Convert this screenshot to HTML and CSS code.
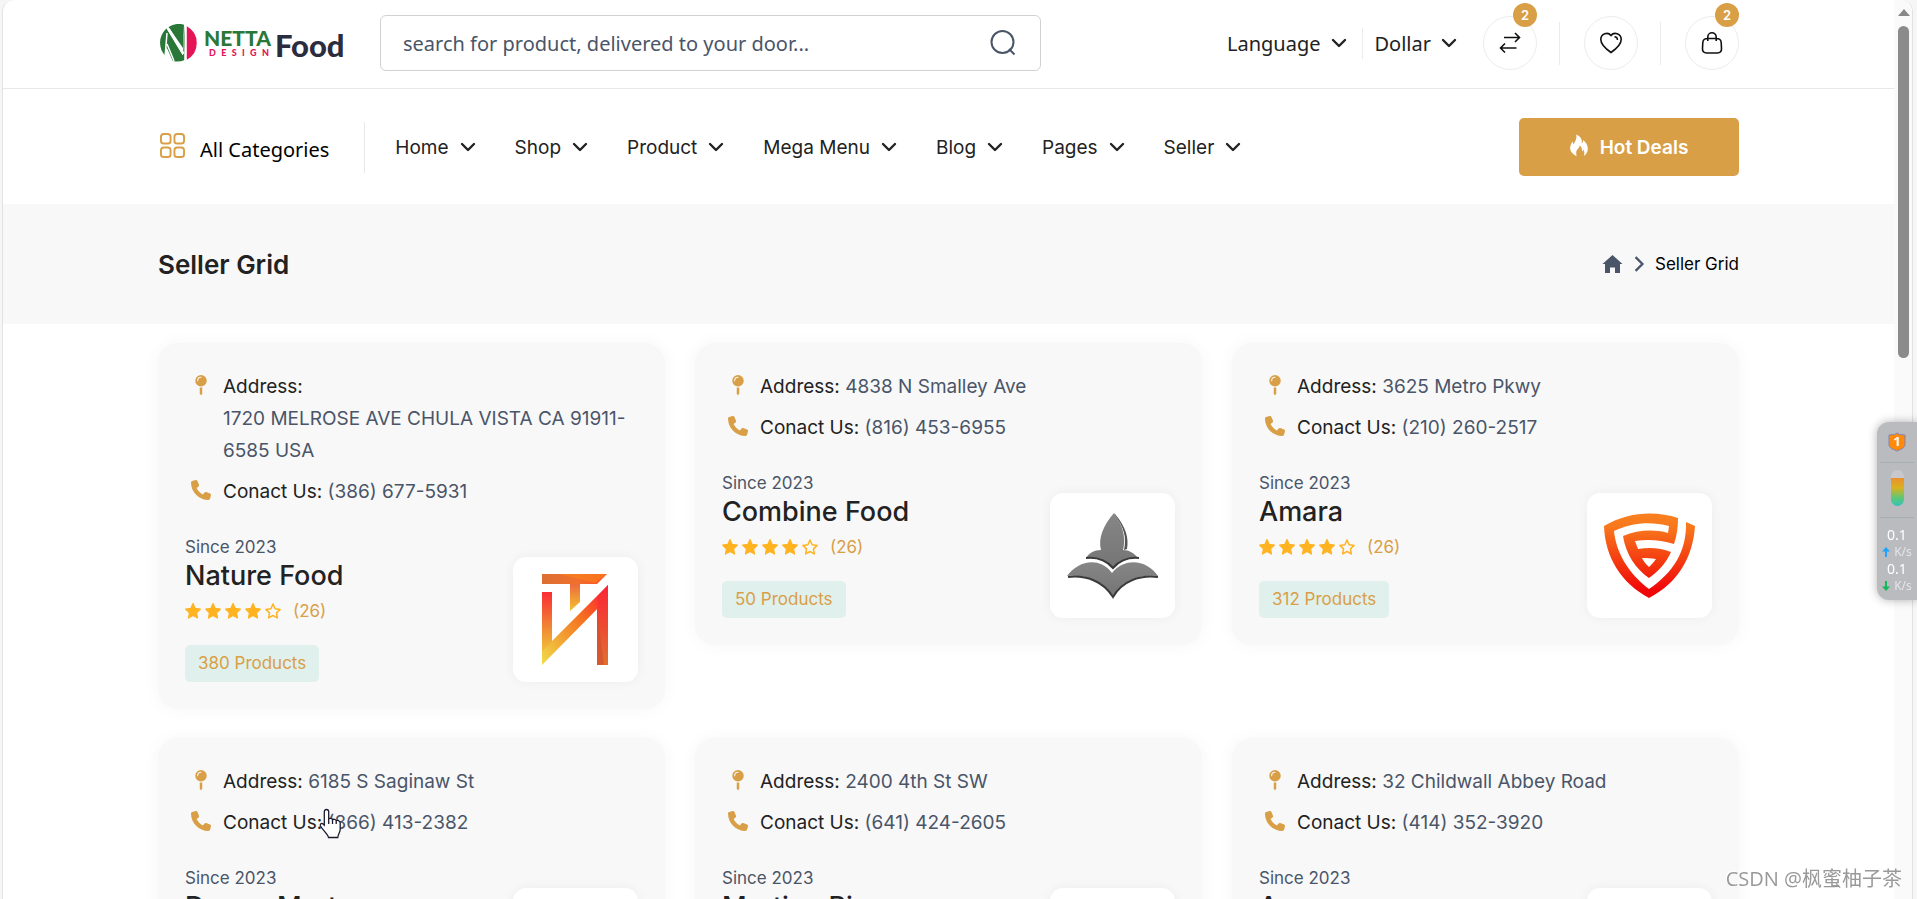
FILE: index.html
```html
<!DOCTYPE html>
<html lang="en">
<head>
<meta charset="utf-8">
<title>Seller Grid</title>
<link rel="stylesheet" href="styles.css">
</head>
<body>
<svg class="sprite" aria-hidden="true">
  <symbol id="chevron" viewBox="0 0 16 16"><path d="M2 5l6 6 6-6" fill="none" stroke="currentColor" stroke-width="2.4" stroke-linecap="round" stroke-linejoin="round"/></symbol>
  <symbol id="pin" viewBox="0 0 12 22"><circle cx="6" cy="6" r="6"/><path d="M4.700 13h2.600v6.500L6 21.600l-1.300-2.100z"/><path d="M2.500 6A3.600 3.600 0 0 1 6 2.400" fill="none" stroke="#f8f8f8" stroke-width="1.100" stroke-linecap="round"/></symbol>
  <symbol id="phone" viewBox="0 0 512 512"><path d="M164.900 24.600c-7.700-18.600-28-28.500-47.400-23.200l-88 24C12.100 30.200 0 46 0 64c0 247.400 200.600 448 448 448 18 0 33.800-12.100 38.600-29.500l24-88c5.300-19.400-4.600-39.700-23.200-47.400l-96-40c-16.300-6.800-35.200-2.100-46.300 11.600L304.700 368C234.300 334.700 177.300 277.700 144 207.300l49.300-40.300c13.700-11.200 18.400-30 11.600-46.300z"/></symbol>
  <symbol id="star" viewBox="0 0 16 16"><path d="M8 .6l2.200 4.800 5.200.7-3.800 3.700.9 5.300L8 12.600l-4.500 2.500.9-5.300L.6 6.100l5.200-.7z" stroke="currentColor" stroke-width="1.200" stroke-linejoin="round"/></symbol>
  <symbol id="star-empty" viewBox="0 0 16 16"><path d="M8 1l2.100 4.700 5 .7-3.600 3.500.8 5L8 12.500l-4.300 2.400.8-5L.9 6.400l5-.7z" fill="none" stroke="currentColor" stroke-width="1.500" stroke-linejoin="round"/></symbol>
  <symbol id="rating" viewBox="0 0 96 16"><use href="#star" width="16" height="16"/><use href="#star" x="20" width="16" height="16"/><use href="#star" x="40" width="16" height="16"/><use href="#star" x="60" width="16" height="16"/><use href="#star-empty" x="80" width="16" height="16"/></symbol>
</svg>

<div class="window">
<div class="page">
  <header>
    <div class="topbar">
      <div class="container topbar-row">
        <a class="logo" href="#">
          <svg viewBox="0 0 38 38" class="logo-mark" aria-hidden="true">
            <path d="M24.500.8v17.800l-.3 17.700A19 19 0 0 1 13 37l-.2-.1L6.500 23 5 31.600A19 19 0 0 1 5.400 5.600L6.500 4.500 23 31.500z M8.500 3A19 19 0 0 1 24 .7L23 24z" fill="#2a7838" fill-rule="evenodd"/>
            <path d="M8.500 5L23.500 30" stroke="#fff" stroke-width="2.500"/>
            <path d="M5.200 31L7 9M7 20l7 17" stroke="#fff" stroke-width="1.500"/>
            <path d="M26.800 2.300A19 19 0 0 1 26.800 35.700z" fill="#e51457"/>
          </svg>
          <span class="logo-brand"><span class="logo-name">NETTA</span><span class="logo-sub"><span>D</span><span>E</span><span>S</span><span>I</span><span>G</span><span>N</span></span></span>
          <span class="logo-food">Food</span>
        </a>
        <form class="search">
          <input type="text" aria-label="Search" placeholder="search for product, delivered to your door...">
          <button type="button" aria-label="Search"><svg viewBox="0 0 26 26"><circle cx="12.500" cy="12" r="11"/><path d="M19 19l5.500 5.500"/></svg></button>
        </form>
        <div class="tools">
          <button class="pick" type="button">Language <svg class="chev"><use href="#chevron"/></svg></button>
          <span class="rule short"></span>
          <button class="pick" type="button">Dollar <svg class="chev"><use href="#chevron"/></svg></button>
          <a class="round" href="#" aria-label="Compare"><svg viewBox="0 0 22 22"><path d="M5 5.500h15.500M16 1l4.500 4.500L16 10M17.500 16H1.500M6 11.500L1.500 16 6 20.500"/></svg><span class="count">2</span></a>
          <span class="rule"></span>
          <a class="round" href="#" aria-label="Wishlist"><svg viewBox="0 0 22 22"><path d="M11 20.500C6 17 .8 12.500.8 7.500.8 1.500 8-.5 11 3.500c3-4 10.200-2 10.200 4 0 5-5.200 9.500-10.200 13z"/><path d="M14.500 4.800c2 0 3 1.300 3 3.200" stroke-width="1.400"/></svg></a>
          <span class="rule"></span>
          <a class="round" href="#" aria-label="Cart"><svg viewBox="0 0 22 22"><path d="M6.500 6.500h9c3 0 4.500 1.500 4.700 4l.3 6c.2 2.800-1.300 4.500-4 4.500h-11c-2.700 0-4.200-1.700-4-4.500l.3-6c.2-2.500 1.700-4 4.700-4zM6.800 9V5a4.200 4.200 0 0 1 8.400 0v4"/></svg><span class="count">2</span></a>
        </div>
      </div>
    </div>
    <div class="container navbar">
      <button class="categories" type="button">
        <svg viewBox="0 0 26 26"><rect x="1" y="1" width="10" height="10" rx="3"/><rect x="15" y="1" width="10" height="10" rx="3"/><rect x="1" y="15" width="10" height="10" rx="3"/><rect x="15" y="15" width="10" height="10" rx="3"/></svg>
        <span>All Categories</span>
      </button>
      <nav class="menu">
        <a href="#">Home <svg class="chev"><use href="#chevron"/></svg></a>
        <a href="#">Shop <svg class="chev"><use href="#chevron"/></svg></a>
        <a href="#">Product <svg class="chev"><use href="#chevron"/></svg></a>
        <a href="#">Mega Menu <svg class="chev"><use href="#chevron"/></svg></a>
        <a href="#">Blog <svg class="chev"><use href="#chevron"/></svg></a>
        <a href="#">Pages <svg class="chev"><use href="#chevron"/></svg></a>
        <a href="#">Seller <svg class="chev"><use href="#chevron"/></svg></a>
      </nav>
      <button class="deals" type="button">
        <svg viewBox="0 0 18 22"><path d="M6 0c4.500 1.500 6.500 5 5.800 9 1-.8 1.400-2 1.400-3.400C16 8 18 11 17.800 14.500c-.2 3-1.600 5.400-4 7 .9-2.500.8-4.500-.5-6.500-.2 1-.6 1.700-1.200 2 0-3-.6-4.600-2.400-6-.2 2.800-3.700 4-3.500 7.500 0 1.200.1 2.100.5 3.300C3 20 .5 17.500.2 14.500 0 11.500 1 9 2.800 7c0 1.200.2 2.200.8 3C4.800 7 7.500 4 6 0z"/></svg>
        Hot Deals
      </button>
    </div>
  </header>

  <section class="band">
    <div class="container band-row">
      <h1>Seller Grid</h1>
      <nav class="crumbs" aria-label="Breadcrumb">
        <a href="#" aria-label="Home"><svg class="house" viewBox="0 0 20 18"><path d="M10 0l10 9h-2.500v9h-5v-5.500h-5V18h-5V9H0z"/></svg></a>
        <svg class="sep" viewBox="0 0 10 14"><path d="M2 1l6 6-6 6"/></svg>
        <span>Seller Grid</span>
      </nav>
    </div>
  </section>

  <main class="container grid">
    <article class="card">
      <ul class="info">
        <li><svg class="pin"><use href="#pin"/></svg><p><b>Address:</b> <span>1720 MELROSE AVE CHULA VISTA CA 91911-6585 USA</span></p></li>
        <li><svg class="phone"><use href="#phone"/></svg><p><b>Conact Us:</b> <span>(386) 677-5931</span></p></li>
      </ul>
      <div class="seller">
        <div>
          <p class="since">Since 2023</p>
          <h2>Nature Food</h2>
          <div class="rating"><svg><use href="#rating"/></svg><span>(26)</span></div>
          <a class="products" href="#">380 Products</a>
        </div>
        <div class="mark">
          <svg viewBox="0 0 92 92">
            <defs>
              <linearGradient id="n1" x1="0" y1="0" x2="1" y2="0"><stop offset="0" stop-color="#dd6f33"/><stop offset=".55" stop-color="#f0702c"/><stop offset="1" stop-color="#ff4a24"/></linearGradient>
              <linearGradient id="n2" x1="0" y1="0" x2="0" y2="1"><stop offset="0" stop-color="#ef6a3c"/><stop offset="1" stop-color="#f2c22f"/></linearGradient>
              <linearGradient id="n3" x1="0" y1="0" x2="0" y2="1"><stop offset="0" stop-color="#fb2b35"/><stop offset=".5" stop-color="#f08a34"/><stop offset="1" stop-color="#f2e03a"/></linearGradient>
              <linearGradient id="n4" x1="1" y1="0" x2="0" y2="1"><stop offset="0" stop-color="#ff1236"/><stop offset=".4" stop-color="#f5701f"/><stop offset="1" stop-color="#efdc4a"/></linearGradient>
              <linearGradient id="n5" x1="0" y1="0" x2="0" y2="1"><stop offset="0" stop-color="#fb2435"/><stop offset="1" stop-color="#e0702f"/></linearGradient>
            </defs>
            <path d="M12 0h65L67 10H12z" fill="url(#n1)"/><path d="M29 0h48L65 9z" fill="#f9801d" opacity=".7"/>
            <path d="M40 10h10v18l-10 9z" fill="url(#n2)"/>
            <path d="M12 18h10v50L12 91z" fill="url(#n3)"/>
            <path d="M12 91V78l10-11 56-56v13z" fill="url(#n4)"/>
            <path d="M78 11v80H67V36L68 22z" fill="url(#n5)"/><path d="M67 36l7 55h-7z" fill="#d2502f" opacity=".7"/>
          </svg>
        </div>
      </div>
    </article>

    <article class="card">
      <ul class="info">
        <li><svg class="pin"><use href="#pin"/></svg><p><b>Address:</b> <span>4838 N Smalley Ave</span></p></li>
        <li><svg class="phone"><use href="#phone"/></svg><p><b>Conact Us:</b> <span>(816) 453-6955</span></p></li>
      </ul>
      <div class="seller">
        <div>
          <p class="since">Since 2023</p>
          <h2>Combine Food</h2>
          <div class="rating"><svg><use href="#rating"/></svg><span>(26)</span></div>
          <a class="products" href="#">50 Products</a>
        </div>
        <div class="mark">
          <svg viewBox="0 0 92 92">
            <defs><linearGradient id="lf" x1="0" y1="0" x2="0" y2="1"><stop offset="0" stop-color="#868686"/><stop offset="1" stop-color="#757575"/></linearGradient></defs>
            <path class="leaf-shadow" d="M48 4C59 17 62 28 60 39l-3 1c2-12 0-24-10-35z"/>
            <path class="leaf-shine" d="M47 4C57 17 60 28 57 39l-1.500.5C58 27 55 16 46 5z"/>
            <g fill="url(#lf)"><path d="M47 3C36 16 31 28 34 40c-7 0-12 3-15 8 11-1 20 2 27 10 7-8 16-11 25-10-4-5-9-8-15-8 3-12 0-25-9-37z"/><path d="M0 66c11-15 32-20 45-3 14-17 36-12 46 3-20-2-36 4-45 20C36 71 19 64 0 66z"/></g>
            <path class="leaf-edge" d="M1 67c18-2 35 4 45 20 9-16 26-22 45-20M19 48c10-1 20 2 27 10 7-8 15-11 26-10"/>
          </svg>
        </div>
      </div>
    </article>

    <article class="card">
      <ul class="info">
        <li><svg class="pin"><use href="#pin"/></svg><p><b>Address:</b> <span>3625 Metro Pkwy</span></p></li>
        <li><svg class="phone"><use href="#phone"/></svg><p><b>Conact Us:</b> <span>(210) 260-2517</span></p></li>
      </ul>
      <div class="seller">
        <div>
          <p class="since">Since 2023</p>
          <h2>Amara</h2>
          <div class="rating"><svg><use href="#rating"/></svg><span>(26)</span></div>
          <a class="products" href="#">312 Products</a>
        </div>
        <div class="mark">
          <svg viewBox="0 0 92 92">
            <defs><linearGradient id="sh" gradientUnits="userSpaceOnUse" x1="0" y1="4" x2="0" y2="88"><stop offset="0" stop-color="#f98020"/><stop offset=".15" stop-color="#f8781c"/><stop offset=".9" stop-color="#f00808"/></linearGradient></defs>
            <path fill="url(#sh)" d="M0 16C25 1 53 1 74 8c0 9-1 17-4 26-13-4-26-5-39-3l3 8c12-2 23-1 33 3-5 11-12 19-22 26C32 59 22 45 19 26c15-6 30-7 45-3l1-7c-19-5-38-3-55 5C12 42 24 63 45 79c24-16 38-38 37-67l9 4c-2 31-17 57-46 72C17 73 1 47 0 16zM38 48c2 4 4 6 7 9 3-3 5-5 7-8-5-1-9-1-14-1z" fill-rule="evenodd"/>
          </svg>
        </div>
      </div>
    </article>

    <article class="card">
      <ul class="info">
        <li><svg class="pin"><use href="#pin"/></svg><p><b>Address:</b> <span>6185 S Saginaw St</span></p></li>
        <li><svg class="phone"><use href="#phone"/></svg><p><b>Conact Us:</b> <span>(866) 413-2382</span></p></li>
      </ul>
      <div class="seller">
        <div>
          <p class="since">Since 2023</p>
          <h2>Dream Mart</h2>
          <div class="rating"><svg><use href="#rating"/></svg></div>
        </div>
        <div class="mark"></div>
      </div>
    </article>

    <article class="card">
      <ul class="info">
        <li><svg class="pin"><use href="#pin"/></svg><p><b>Address:</b> <span>2400 4th St SW</span></p></li>
        <li><svg class="phone"><use href="#phone"/></svg><p><b>Conact Us:</b> <span>(641) 424-2605</span></p></li>
      </ul>
      <div class="seller">
        <div>
          <p class="since">Since 2023</p>
          <h2>Martino Pizza</h2>
          <div class="rating"><svg><use href="#rating"/></svg></div>
        </div>
        <div class="mark"></div>
      </div>
    </article>

    <article class="card">
      <ul class="info">
        <li><svg class="pin"><use href="#pin"/></svg><p><b>Address:</b> <span>32 Childwall Abbey Road</span></p></li>
        <li><svg class="phone"><use href="#phone"/></svg><p><b>Conact Us:</b> <span>(414) 352-3920</span></p></li>
      </ul>
      <div class="seller">
        <div>
          <p class="since">Since 2023</p>
          <h2>Amara</h2>
          <div class="rating"><svg><use href="#rating"/></svg></div>
        </div>
        <div class="mark"></div>
      </div>
    </article>
  </main>
</div>

<div class="scrollbar" aria-hidden="true">
  <svg viewBox="0 0 14 8"><path d="M7 0l7 8H0z"/></svg>
  <div class="thumb"></div>
</div>
</div>

<aside class="monitor">
  <svg class="shield" viewBox="0 0 18 20"><path d="M9 1l2.500 1.500L17 3v9.500c0 3-3 4.500-8 6.500-5-2-8-3.500-8-6.500V3l5.500-.5z"/><text x="9" y="14">1</text></svg>
  <div class="gauge"><div></div></div>
  <div class="speed">
    <div>0.1</div>
    <div class="unit up"><svg viewBox="0 0 8 10"><path d="M4 0l4 4.500H5V10H3V4.500H0z"/></svg>K/s</div>
    <div>0.1</div>
    <div class="unit down"><svg viewBox="0 0 8 10"><path d="M4 10L0 5.500h3V0h2v5.500h3z"/></svg>K/s</div>
  </div>
</aside>

<div class="watermark">CSDN @枫蜜柚子茶</div>

<svg class="cursor" viewBox="0 0 24 32" aria-hidden="true"><path d="M7.500 1.500c1.600 0 2.200 1 2.200 2.300V11c.5-.9 3.600-.8 3.800.8.800-.9 3.500-.7 3.700.9 1-.8 4 .2 4 2.300v6.500c0 3-2.200 4.500-2.400 8H9.500C9 26 4 22.500 1.500 18c-.8-2 1-3 2.300-2.200l1.500 1.500V3.800c0-1.300.7-2.300 2.200-2.300zM9.700 11v5M13.500 12v4M17.200 13v3"/></svg>
</body>
</html>
```

FILE: styles.css
```css
* { box-sizing: border-box; }

body {
  margin: 0;
  background: #f6f6f6;
  color: #222;
  font-family: Inter, "Liberation Sans", sans-serif;
  font-size: 19px;
}

h1, h2, p, ul { margin: 0; padding: 0; }
a { color: inherit; text-decoration: none; }
button { border: 0; padding: 0; background: none; color: inherit; font: inherit; }
svg { display: block; flex: none; fill: currentColor; }

.sprite { position: absolute; width: 0; height: 0; }

.window {
  display: flex;
  height: 100vh;
  margin: 0 4px 0 2px;
  border: 1px solid #e2e2e2;
  border-width: 0 1px;
  border-radius: 12px 12px 0 0;
  background: #fff;
  overflow: hidden;
}

.page { flex: 1; }

.container {
  max-width: 1581px;
  margin: 0 auto;
}

/* Top bar */
.topbar {
  padding: 15px 0 17px;
  border-bottom: 1px solid #e8e8e8;
}

.topbar-row { display: flex; align-items: center; }

.logo {
  display: flex;
  align-items: center;
  width: 222px;
  padding-left: 2px;
  font-family: Lato, sans-serif;
  font-weight: 900;
}

.logo-mark { width: 38px; height: 38px; }
.logo-brand { display: flex; flex-direction: column; margin: 2px 4px 0 6px; }
.logo-name { color: #2a7838; font-size: 21px; line-height: 18px; }
.logo-sub {
  display: flex;
  justify-content: space-between;
  padding: 0 2px 0 5px;
  color: #e51457;
  font-size: 9px;
  line-height: 12px;
}
.logo-food { padding-top: 4px; color: #2b2d3f; font-size: 31px; line-height: 40px; }

.search {
  display: flex;
  align-items: center;
  flex: 0 1 661px;
  height: 56px;
  padding: 0 24px 0 22px;
  border: 1px solid #cfd2d4;
  border-radius: 6px;
}

.search input {
  flex: 1;
  min-width: 0;
  padding: 0;
  border: 0;
  outline: 0;
  background: none;
  color: #4a5568;
  font: 20px "Noto Sans", sans-serif;
}

.search input::placeholder { color: #4a5568; opacity: 1; }
.search svg { width: 26px; height: 26px; fill: none; stroke: #4a5568; stroke-width: 2; }

.tools { display: flex; align-items: center; margin-left: auto; }

.pick {
  display: flex;
  align-items: center;
  gap: 10px;
  font: 20px "Noto Sans", sans-serif;
}

.chev { width: 16px; height: 16px; }

.rule { width: 1px; height: 43px; margin: 0 24px 0 22px; background: #ececec; }
.rule.short { height: 31px; margin: 0 12px 0 15px; }

.round {
  position: relative;
  display: grid;
  place-items: center;
  width: 54px;
  height: 54px;
  border: 1px solid #ececec;
  border-radius: 50%;
}

.pick + .round { margin-left: 26px; }
.round svg { width: 22px; height: 22px; fill: none; stroke: #111; stroke-width: 1.6; }

.count {
  position: absolute;
  top: -14px;
  right: -1px;
  width: 24px;
  height: 24px;
  border-radius: 50%;
  background: #d99f46;
  color: #fff;
  font-size: 13px;
  font-weight: 600;
  line-height: 24px;
  text-align: center;
}

/* Navigation */
.navbar {
  display: flex;
  align-items: center;
  padding: 29px 0 28px;
}

.categories {
  display: flex;
  align-items: center;
  gap: 15px;
  height: 51px;
  padding: 0 35px 0 2px;
  border-right: 1px solid #e8e8e8;
  color: #000;
  font: 20px "Noto Sans", sans-serif;
}

.categories svg { width: 25px; height: 25px; margin-bottom: 4px; fill: none; stroke: #d99f46; stroke-width: 2; }
.categories span { padding-top: 4px; }

.menu { display: flex; gap: 39px; margin-left: 30px; }
.menu a { display: flex; align-items: center; gap: 11px; }

.deals {
  display: flex;
  align-items: center;
  justify-content: center;
  gap: 12px;
  width: 220px;
  height: 58px;
  margin-left: auto;
  border-radius: 5px;
  background: #d99f46;
  color: #fff;
  font-weight: 600;
}

.deals svg { width: 18px; height: 23px; margin-bottom: 4px; }

/* Title band */
.band { background: #f8f8f8; }
.band-row { display: flex; align-items: center; justify-content: space-between; height: 120px; }
.band h1 { font-size: 26px; font-weight: 600; }

.crumbs { display: flex; align-items: center; gap: 10px; color: #000; font-size: 17px; }
.house { width: 21px; height: 18px; fill: #4a5568; }
.sep { width: 12px; height: 16px; fill: none; stroke: #4a5568; stroke-width: 2; }

/* Seller cards */
.grid {
  display: grid;
  grid-template-columns: repeat(3, 1fr);
  align-items: start;
  gap: 29px 30px;
  padding-top: 19px;
}

.card {
  padding: 28px 27px 27px;
  border-radius: 20px;
  background: #f8f8f8;
  box-shadow: 0 0 18px rgba(0, 0, 0, 0.04);
}

.info { display: grid; gap: 9px; list-style: none; }
.info li { display: flex; gap: 12px; line-height: 32px; }
.info svg { margin-top: 4px; color: #d99f46; }
.info b { font-weight: 400; color: #222; }
.info span { display: inline-block; color: #4a5568; }
.pin { width: 20px; height: 21px; margin-left: 6px; }
.phone { width: 20px; height: 20px; margin-left: 6px; }

.seller { display: flex; align-items: flex-start; justify-content: space-between; margin-top: 28px; }
.since { color: #4a5568; font-size: 17px; line-height: 22px; }
.seller h2 { font-size: 27px; font-weight: 500; line-height: 36px; }

.rating { display: flex; align-items: center; gap: 12px; height: 34px; color: #ffb321; }
.rating svg { width: 96px; height: 16px; }
.rating span { color: #d99f46; font-size: 17px; }

.products {
  display: inline-block;
  margin-top: 17px;
  padding: 0 13px;
  border-radius: 5px;
  background: #e0f0ec;
  color: #d99f46;
  font-size: 17px;
  line-height: 37px;
}

.mark {
  display: grid;
  place-items: center;
  width: 125px;
  height: 125px;
  margin-top: 21px;
  border-radius: 13px;
  background: #fff;
  box-shadow: 0 0 12px rgba(0, 0, 0, 0.05);
}

.mark svg { width: 92px; height: 92px; }
.leaf-shadow { fill: #555; }
.leaf-shine { fill: #eee; }
.leaf-edge { fill: none; stroke: #3a3a3a; stroke-width: 2; }

/* Scroll bar */
.scrollbar { width: 18px; padding: 9px 3px 0 4px; background: #fafafa; }
.scrollbar svg { width: 12px; height: 7px; fill: #888; }
.thumb { height: 332px; margin-top: 10px; border-radius: 6px; background: #8b8b8b; }

/* Floating network monitor */
.monitor {
  position: fixed;
  top: 422px;
  right: 0;
  width: 40px;
  height: 178px;
  padding: 10px 3px;
  border-radius: 12px 0 0 12px;
  background: #b9bbbf;
  box-shadow: 0 0 10px rgba(0, 0, 0, 0.3);
  color: #fff;
  font: 14px/17px "Noto Sans", sans-serif;
  text-align: center;
}

.shield { width: 18px; height: 20px; margin: 0 auto 10px; fill: #ff8a0c; stroke: #7f86b5; }
.shield text { fill: #fff; stroke: none; font: 700 13px "Noto Sans", sans-serif; text-anchor: middle; }

.gauge { padding: 7px 0 11px; border: 1px solid #a5aeb2; border-width: 1px 0; }
.gauge div {
  width: 13px;
  height: 36px;
  margin: 0 auto;
  border-radius: 7px;
  background: linear-gradient(#c6c8cc 8px, #ec8f2e 8px, #d8b21f 18px, #5cc878 28px, #36c2b8);
}

.speed { padding-top: 8px; }
.unit { display: flex; align-items: center; justify-content: center; gap: 4px; color: #e4e5e7; font-size: 12px; }
.unit svg { width: 8px; height: 10px; }
.up svg { fill: #1ea4ff; }
.down svg { fill: #12b85a; }

.watermark {
  position: fixed;
  right: 15px;
  bottom: 6px;
  color: #999;
  font: 20px/28px "Open Sans", "Noto Sans CJK SC", sans-serif;
  text-shadow: -1px -1px 0 #fff;
}

.cursor {
  position: fixed;
  top: 808px;
  left: 319px;
  width: 24px;
  height: 32px;
  fill: #fff;
  stroke: #1b1b2f;
  stroke-width: 1.3;
}
```
